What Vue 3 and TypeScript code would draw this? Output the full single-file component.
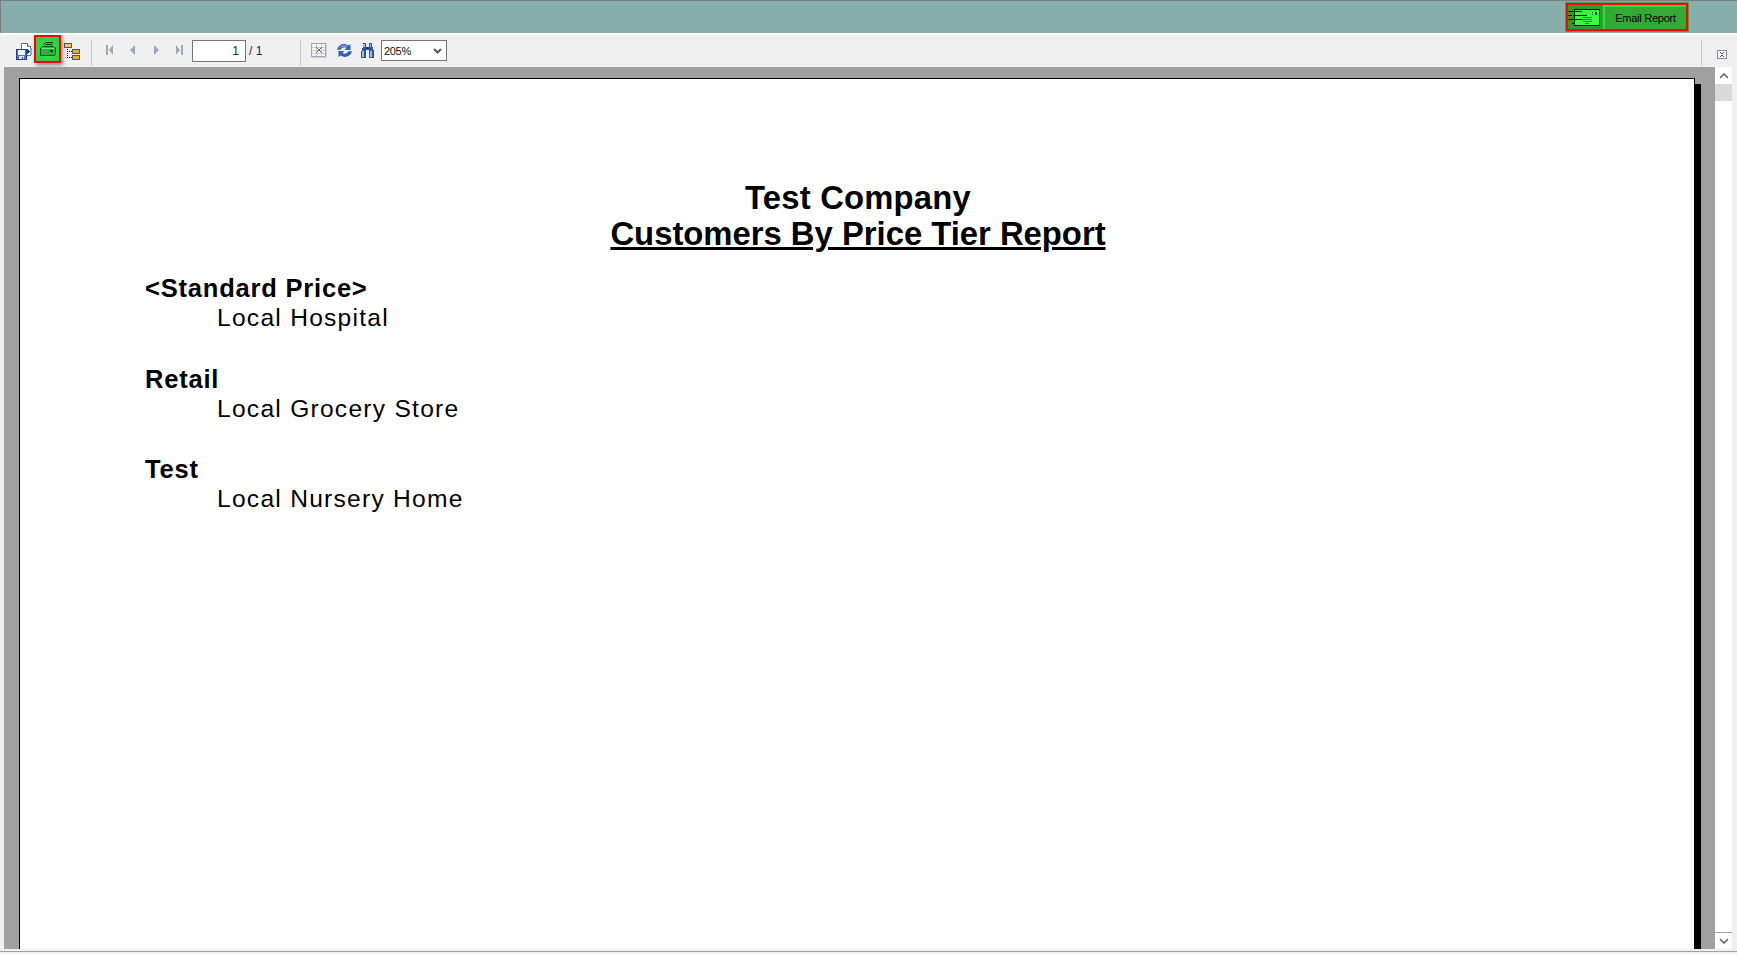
<script setup lang="ts">
const navIcons: string[] = ['first', 'prev', 'next', 'last']
const navPaths: Record<string, string> = {
  first: 'M0 0h2v10H0zM7 0v10L3 5z',
  prev: 'M6 0v10L1 5z',
  next: 'M1 0v10l5-5z',
  last: 'M5 0h2v10H5zM0 0v10l4-5z',
}
const groups: { title: string; customer: string }[] = [
  { title: '<Standard Price>', customer: 'Local Hospital' },
  { title: 'Retail', customer: 'Local Grocery Store' },
  { title: 'Test', customer: 'Local Nursery Home' },
]
</script>

<template>
  <div class="app">
    <header class="topbar">
      <div class="email-group">
        <div class="email-icon">
          <svg width="32" height="17" viewBox="0 0 32 17" shape-rendering="crispEdges">
            <rect x="6.500" y="0.500" width="25" height="16" fill="#35ff3a" stroke="#000" />
            <path d="M0 2h13v1H0zM5 6h14v1H5zM0 6h4v1H0zM0 10h15v1H0zM4 14h3v1H4z" fill="#111" />
            <path d="M10 2h4v1h-4zM24 3h1v1h-1zM24 5h1v1h-1zM27 3h2v3h-2z" fill="#0a4a10" />
            <path d="M15 8h9v1h-9zM15 10h9v1h-9zM15 12h9v1h-9zM17 14h4v1h-4z" fill="#1f9a27" />
          </svg>
        </div>
        <button class="email-btn">Email Report</button>
      </div>
    </header>
    <div class="white-gap"></div>
    <nav class="toolbar">
      <span class="icon save">
        <svg width="17" height="17" viewBox="0 0 17 17" shape-rendering="crispEdges">
          <path d="M5.500.5h6l3 3v9h-9z" fill="#fff" stroke="#6f6f6f" />
          <path d="M11.500.5v3h3" fill="#ddd" stroke="#6f6f6f" />
          <path d="M11 6h1v1h1v1h1v1h-1v1h-1v1h-1z" fill="#15418f" />
          <path d="M14 5h2v7h-2z" fill="#7fb3e8" />
          <path d="M0.500 6.500h10v10h-10z" fill="#4a6fc4" stroke="#2a3f8c" />
          <path d="M2 7h7v5H2z" fill="#f4f4f4" />
          <path d="M3 13h5v3H3z" fill="#dfe6f4" />
          <path d="M6 14h1v2H6z" fill="#2a3f8c" />
        </svg>
      </span>
      <span class="print-btn">
        <svg width="17" height="14" viewBox="0 0 17 14" shape-rendering="crispEdges">
          <path d="M6 1h7l1 1-1 3H4z" fill="#2fb53c" />
          <path d="M6 0h8v1H6zM5 1h1v1H5zM4 2h1v1H4zM7 2h6v1H7z" fill="#123d16" />
          <path d="M3 4h12v1h1v8H1V6h1V5h1z" fill="#29b238" />
          <path d="M3 4h12v1H3zM2 5h1v1H2zM1 6h1v7H1zM1 13h15v1H1zM16 5h1v8h-1z" fill="#155a1e" />
          <path d="M3 6h12v1H3z" fill="#6fe87a" />
          <path d="M11 8h3v2h-3z" fill="#0f3d13" />
        </svg>
      </span>
      <span class="icon tree">
        <svg width="16" height="17" viewBox="0 0 16 17" shape-rendering="crispEdges">
          <path d="M.5.5h7v4h-7z" fill="#f5c060" stroke="#555" />
          <path d="M8.500 6.500h7v4h-7zM8.500 12.500h7v4h-7z" fill="#f5a623" stroke="#555" />
          <path d="M3 6h1v1H3zM3 8h1v1H3zM3 10h1v1H3zM3 12h1v1H3zM3 14h1v1H3zM5 8h1v1H5zM7 8h1v1H7zM5 14h1v1H5zM7 14h1v1H7z" fill="#111" />
        </svg>
      </span>
      <span class="divider first-divider"></span>
      <span class="nav">
        <svg v-for="n in navIcons" :key="n" width="7" height="10" viewBox="0 0 7 10">
          <path :d="navPaths[n]" fill="#a3a5bd" />
        </svg>
      </span>
      <input class="page-input" value="1" />
      <span class="page-total">/ 1</span>
      <span class="divider second-divider"></span>
      <span class="icon close">
        <svg width="16" height="15" viewBox="0 0 16 15" shape-rendering="crispEdges">
          <rect x=".5" y=".5" width="14" height="13" fill="#f4f4f4" stroke="#a4a4bc" />
          <path d="M1 4.500h13M1 7.500h13M1 10.500h13M5.500 1v12M10.500 1v12" stroke="#cfcfcf" />
          <path d="M15 1h1v14H1v-1h14z" fill="#d0d0dc" />
          <path d="M5 4h1v1h1v1h2V5h1V4h1v1h-1v1H9v2h1v1h1v1h-1V9H9V8H7v1H6v1H5V9h1V8h1V6H6V5H5z" fill="#6a6a6a" />
        </svg>
      </span>
      <span class="icon refresh">
        <svg width="17" height="15" viewBox="0 0 17 15">
          <path d="M1 6.500C2.500 1.500 8 -.5 12.500 2.500L14.500 1v6H8.500l2-2C8.500 3.500 5.500 4.500 4.500 7z" fill="#2f63b8" />
          <path d="M16 8.500C14.500 13.500 9 15.500 4.500 12.500L2.500 14V8h6l-2 2c2 1.500 5 .5 6-2z" fill="#2f63b8" />
          <path d="M4 5C5.500 3 8 2 11 3.500" fill="none" stroke="#a9c8f0" stroke-width="1" />
        </svg>
      </span>
      <span class="icon binoc">
        <svg width="15" height="15" viewBox="0 0 15 15" shape-rendering="crispEdges">
          <path d="M3 0h3v4h3V0h3v4l1 1v2l1 1v7H9V7H6v8H1V8l1-1V5l1-1z" fill="#2f55a8" />
          <path d="M3 1h2v3H3zM10 1h1v3h-1zM2 8h2v6H2zM10 8h2v6h-2z" fill="#9dbbea" />
          <path d="M6 4h3v2H6z" fill="#1f3c80" />
        </svg>
      </span>
      <span class="select-wrap">
        <select class="zoom-select">
          <option>205%</option>
        </select>
        <svg class="chevron" width="9" height="6" viewBox="0 0 9 6"><path d="M1 1l3.500 3.500L8 1" fill="none" stroke="#555" stroke-width="2" /></svg>
      </span>
      <span class="spacer"></span>
      <span class="divider"></span>
      <span class="icon small-close">
        <svg width="10" height="9" viewBox="0 0 10 9" shape-rendering="crispEdges">
          <rect x=".5" y=".5" width="9" height="8" fill="#f4f4f4" stroke="#8a8aa8" />
          <path d="M3 2h1v1h2V2h1v1H6v1H5v1h1v1h1v1H6V6H4v1H3V6h1V5h1V4H4V3H3z" fill="#555" />
        </svg>
      </span>
    </nav>
    <main class="viewer">
      <div class="canvas">
        <article class="page">
          <h1 class="company">Test Company</h1>
          <h2 class="report">Customers By Price Tier Report</h2>
          <section v-for="g in groups" :key="g.title" class="group">
            <div class="group-title">{{ g.title }}</div>
            <div class="customer">{{ g.customer }}</div>
          </section>
        </article>
      </div>
      <aside class="scrollbar">
        <span class="sb-btn">
          <svg width="10" height="6" viewBox="0 0 10 6"><path d="M1 5l4-4 4 4" fill="none" stroke="#606060" stroke-width="1.500" /></svg>
        </span>
        <span class="sb-thumb"></span>
        <span class="sb-track"></span>
        <span class="sb-btn down">
          <svg width="10" height="6" viewBox="0 0 10 6"><path d="M1 1l4 4 4-4" fill="none" stroke="#606060" stroke-width="1.500" /></svg>
        </span>
      </aside>
    </main>
    <footer class="bottom"></footer>
  </div>
</template>

<style>
html, body { margin: 0; overflow: hidden; }
</style>

<style scoped>
.app {
  width: 1737px;
  height: 954px;
  display: flex;
  flex-direction: column;
  overflow: hidden;
  background: #f0f0f0;
  font-family: "Liberation Sans", Arial, sans-serif;
}
.topbar {
  height: 33px;
  flex: none;
  box-sizing: border-box;
  background: #87aeab;
  border-top: 1px solid #7d7d7d;
  border-left: 1px solid #7d7d7d;
  display: flex;
  align-items: flex-start;
  justify-content: flex-end;
  padding: 2px 49px 0 0;
}
.white-gap { height: 2px; flex: none; background: #fff; }
.email-group {
  height: 28px;
  box-sizing: border-box;
  width: 122px;
  display: flex;
  border: 2px solid #f00;
  background: #2fa832;
  box-shadow: 0 0 0 1px #4a9a50;
}
.email-icon {
  width: 34px;
  flex: none;
  display: flex;
  align-items: center;
  background: #2c9b30;
}
.email-btn {
  flex: 1;
  margin: 0 0 0 1px;
  padding: 0;
  background: #31ab34;
  border: 0;
  border-top: 2px solid #3fcf44;
  border-left: 2px solid #3fcf44;
  color: #000;
  font: 11px "Liberation Sans", Arial, sans-serif;
  letter-spacing: -0.25px;
}
.toolbar {
  height: 32px;
  flex: none;
  display: flex;
  align-items: flex-start;
  padding-left: 4px;
  box-sizing: border-box;
  background: #f0f0f0;
}
.icon { display: flex; flex: none; margin-top: 8px; }
.save { margin-left: 12px; }
.print-btn {
  flex: none;
  width: 27px;
  height: 28px;
  margin-left: 1px;
  box-sizing: border-box;
  border: 2px solid #f00;
  background: radial-gradient(circle, #2fe043 30%, #38c24b 100%);
  box-shadow: 2px 3px 4px #9a9a9a;
  display: flex;
  align-items: center;
  justify-content: center;
}
.tree { margin-left: 3px; }
.divider {
  flex: none;
  width: 1px;
  height: 26px;
  margin-top: 5px;
  background: #c8c8c8;
}
.first-divider { margin-left: 11px; }
.nav {
  flex: none;
  display: flex;
  gap: 16.330px;
  margin: 10px 0 0 14px;
}
.page-input {
  flex: none;
  width: 54px;
  height: 22px;
  margin: 5px 0 0 9px;
  padding: 0 6px 0 0;
  box-sizing: border-box;
  border: 1px solid #767676;
  background: #fff;
  text-align: right;
  color: #2a1a55;
  font: 12px "Liberation Sans", Arial, sans-serif;
  outline: none;
}
.page-total {
  flex: none;
  width: 51px;
  margin: 9px 0 0 3px;
  color: #2a1a55;
  font-size: 12px;
  line-height: 14px;
}
.close { margin-left: 10px; }
.refresh { margin-left: 9px; }
.binoc { margin-left: 7px; }
.select-wrap {
  flex: none;
  position: relative;
  display: flex;
  width: 66px;
  height: 21px;
  margin: 5px 0 0 6px;
}
.zoom-select {
  appearance: none;
  width: 100%;
  height: 100%;
  box-sizing: border-box;
  padding: 0 0 0 2px;
  border: 1px solid #767676;
  border-radius: 0;
  background: #fff;
  color: #111;
  font: 11px "Liberation Sans", Arial, sans-serif;
  letter-spacing: -0.3px;
}
.chevron { position: absolute; right: 5px; top: 8px; pointer-events: none; }
.spacer { flex: 1; }
.small-close { margin: 15px 10px 0 15px; }
.viewer {
  flex: 1;
  min-height: 0;
  display: flex;
  padding: 0 5px 0 4px;
}
.canvas {
  flex: 1;
  min-width: 0;
  overflow: hidden;
  background: #a0a0a0;
  padding: 11px 20px 0 15px;
}
.page {
  height: 1200px;
  box-sizing: border-box;
  background: #fff;
  border: 1px solid #000;
  box-shadow: 6px 6px 0 #000;
  padding: 101px 0 0 125px;
  color: #000;
}
.company, .report {
  margin: 0 0 0 -123px;
  text-align: center;
  font-size: 32.800px;
  font-weight: 700;
  line-height: 36px;
}
.company { letter-spacing: 0.2px; }
.report { text-decoration: underline; margin-bottom: 21px; }
.group { height: 90.600px; }
.group-title {
  font-size: 25.500px;
  font-weight: 700;
  letter-spacing: 0.800px;
  line-height: 30px;
}
.customer {
  font-size: 24.600px;
  letter-spacing: 1.250px;
  line-height: 30px;
  padding-left: 72px;
}
.scrollbar {
  width: 17px;
  flex: none;
  display: flex;
  flex-direction: column;
  background: #fff;
}
.sb-btn {
  height: 17px;
  flex: none;
  display: flex;
  align-items: center;
  justify-content: center;
  background: #fff;
}
.sb-btn.down { box-sizing: border-box; border-top: 1px solid #a0a0a0; }
.sb-thumb { height: 17px; flex: none; background: #dadada; }
.sb-track { flex: 1; background: #fff; }
.bottom {
  height: 5px;
  flex: none;
  background: linear-gradient(#f0f0f0 0 2px, #a0a0a0 2px 3px, #f0f0f0 3px);
}
</style>
